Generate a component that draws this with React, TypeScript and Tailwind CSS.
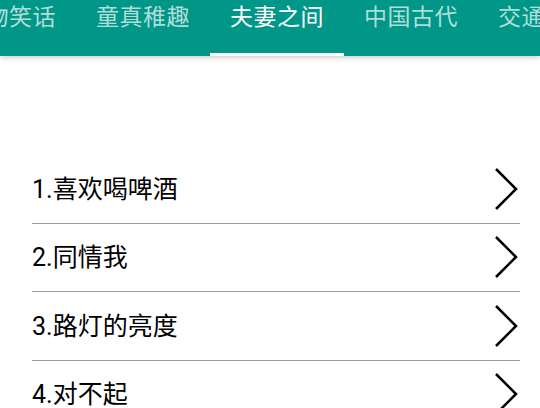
const tabs = ["动物笑话", "童真稚趣", "夫妻之间", "中国古代", "交通工具"];
const active = 2;

const jokes = ["1.喜欢喝啤酒", "2.同情我", "3.路灯的亮度", "4.对不起"];

function Chevron() {
  return (
    <svg width="26" height="44" viewBox="0 0 26 44" fill="none" className="shrink-0">
      <path d="M2 2 L22 22 L2 42" stroke="#000" strokeWidth="2.6" strokeLinejoin="miter" />
    </svg>
  );
}

export default function App() {
  return (
    <div
      className="w-[540px] h-[408px] overflow-hidden bg-white relative"
      style={{ fontFamily: "Roboto, 'Noto Sans CJK SC', sans-serif" }}
    >
      {/* Tab bar, scrolled so the active tab sits mid-screen */}
      <header className="h-14 bg-[#009688] overflow-hidden relative z-10 shadow-[0_2px_5px_rgba(0,0,0,0.18)]">
        <div className="flex -ml-[58px] h-full">
          {tabs.map((t, i) => (
            <div key={t} className="w-[134px] shrink-0 h-full flex flex-col items-center">
              <span
                className={`pt-[3px] text-[23px] leading-[30px] tracking-[0.5px] whitespace-nowrap ${i === active ? "text-white" : "text-white/70"}`}
              >
                {t}
              </span>
              <div className="flex-1" />
              {i === active && <div className="h-[3px] w-full bg-white" />}
            </div>
          ))}
        </div>
      </header>

      {/* List */}
      <main className="pt-[99px] pl-5 pr-2">
        {jokes.map((j) => (
          <div key={j} className="bg-white shadow-[0_0_1px_rgba(0,0,0,0.05)]">
            <div className="ml-3 mr-3 h-[68.5px] flex items-center justify-between border-b border-[#9e9e9e]">
              <span className="text-[25px] text-black leading-none pt-[1px]">{j}</span>
              <Chevron />
            </div>
          </div>
        ))}
      </main>
    </div>
  );
}
